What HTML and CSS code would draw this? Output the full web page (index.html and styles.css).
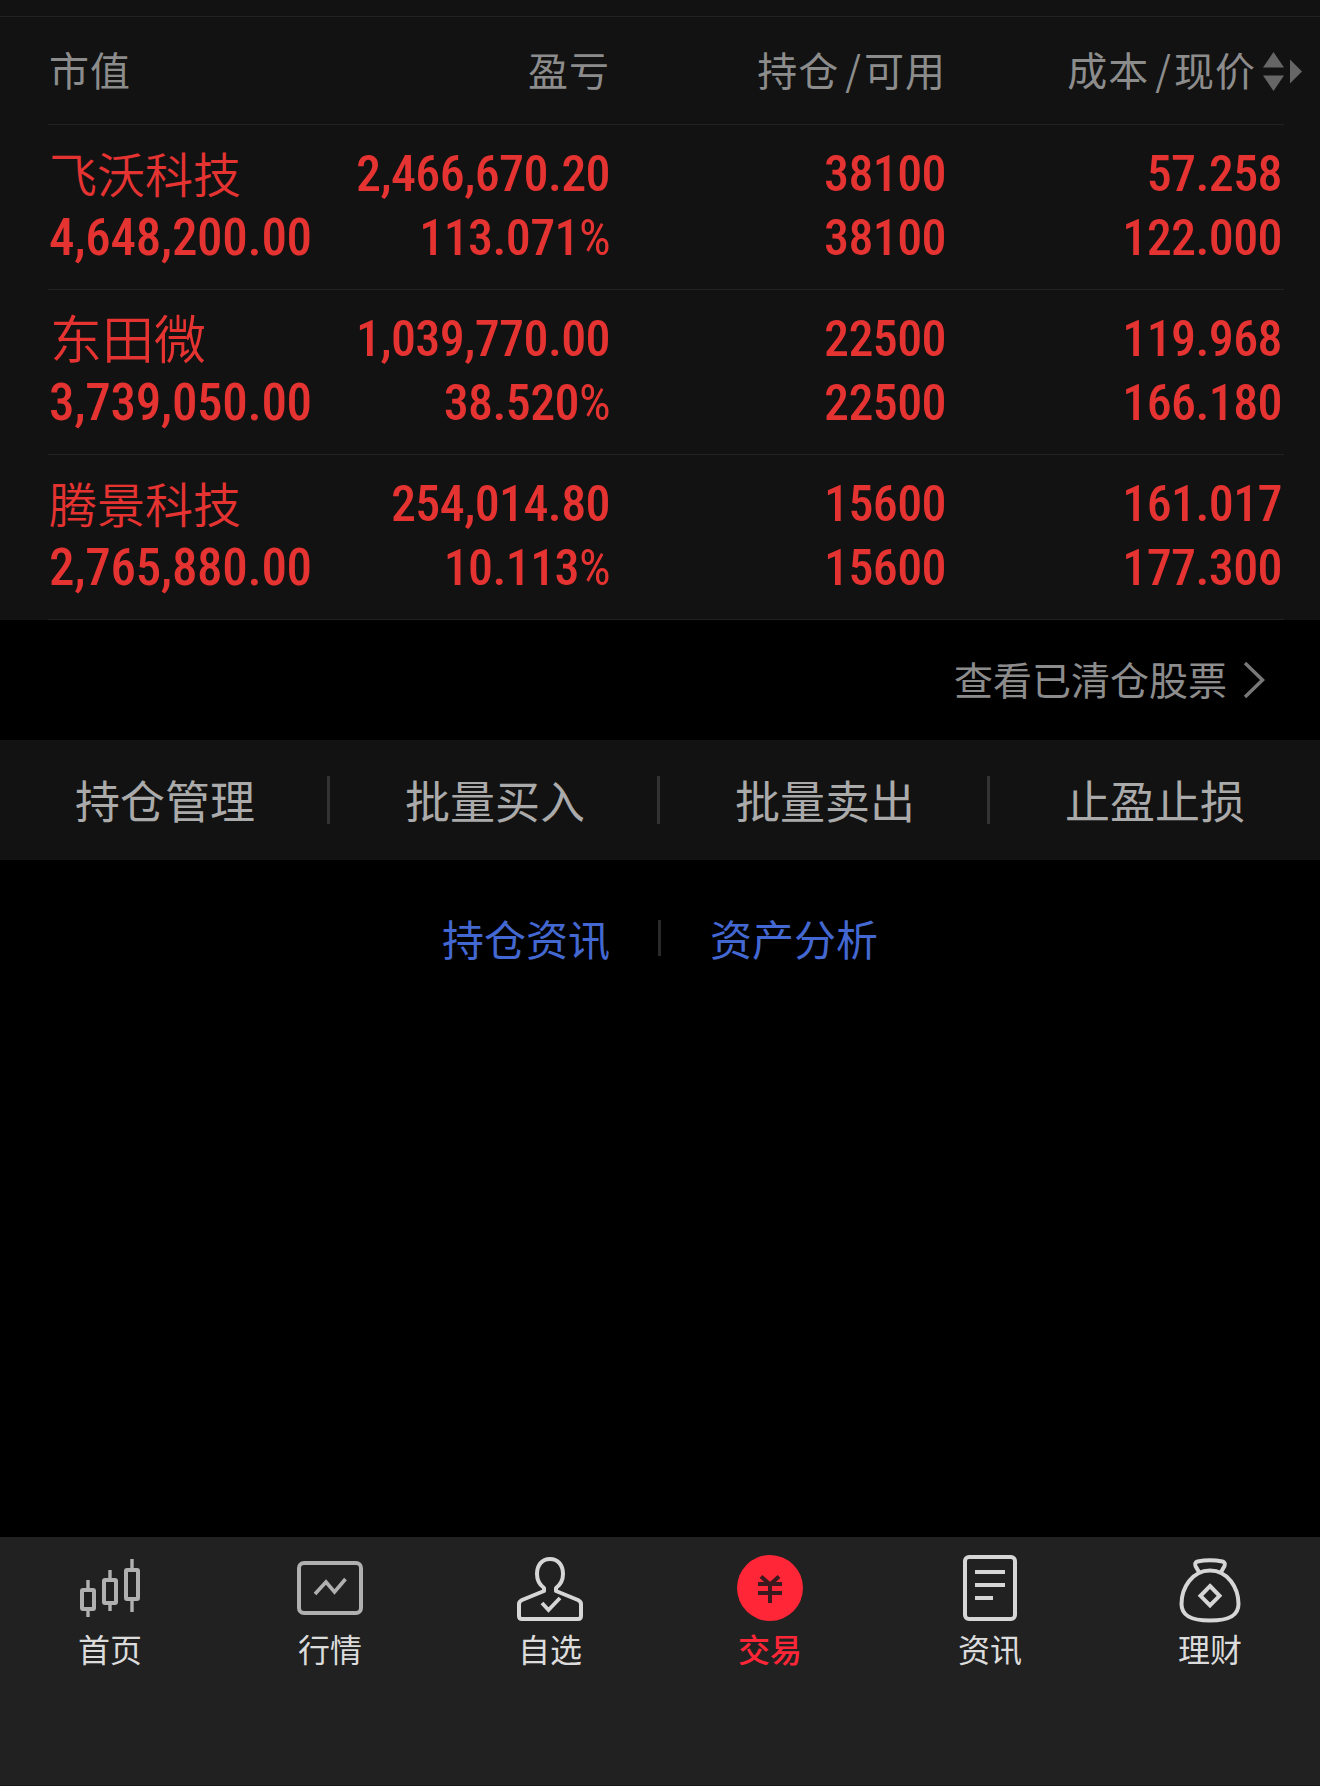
FILE: index.html
```html
<!DOCTYPE html>
<html lang="zh-CN">
<head>
    <meta charset="UTF-8">
    <meta name="viewport" content="width=device-width, initial-scale=1.0">
    <title>持仓</title>
    <link rel="stylesheet" href="styles.css">
</head>
<body>
    <main class="content">
        <section class="holdings">
            <div class="holdings-header grid-row">
                <span>市值</span>
                <span>盈亏</span>
                <span>持仓<i class="slash">/</i>可用</span>
                <span class="sortable">成本<i class="slash">/</i>现价
                    <svg class="sort-icon" width="40" height="40" viewBox="0 0 40 40" fill="#666">
                        <path d="M10.5 0L21 15.5H0zM0 23.5h21L10.5 39zM27 7.5L39 19.5 27 31.5z"/>
                    </svg>
                </span>
            </div>

            <div class="stock grid-row">
                <div class="cell"><span class="name">飞沃科技</span><span>4,648,200.00</span></div>
                <div class="cell"><span>2,466,670.20</span><span>113.071<i class="pct">%</i></span></div>
                <div class="cell"><span>38100</span><span>38100</span></div>
                <div class="cell"><span>57.258</span><span>122.000</span></div>
            </div>

            <div class="stock grid-row">
                <div class="cell"><span class="name name-short">东田微</span><span>3,739,050.00</span></div>
                <div class="cell"><span>1,039,770.00</span><span>38.520<i class="pct">%</i></span></div>
                <div class="cell"><span>22500</span><span>22500</span></div>
                <div class="cell"><span>119.968</span><span>166.180</span></div>
            </div>

            <div class="stock grid-row">
                <div class="cell"><span class="name">腾景科技</span><span>2,765,880.00</span></div>
                <div class="cell"><span>254,014.80</span><span>10.113<i class="pct">%</i></span></div>
                <div class="cell"><span>15600</span><span>15600</span></div>
                <div class="cell"><span>161.017</span><span>177.300</span></div>
            </div>
        </section>

        <a class="cleared">
            <span>查看已清仓股票</span>
            <svg width="22" height="38" viewBox="0 0 22 38" fill="none" stroke="#777" stroke-width="3.5">
                <path d="M2 2L19.5 19 2 36"/>
            </svg>
        </a>

        <div class="actions">
            <a>持仓管理</a>
            <a>批量买入</a>
            <a>批量卖出</a>
            <a>止盈止损</a>
        </div>

        <div class="links">
            <a>持仓资讯</a>
            <a>资产分析</a>
        </div>
    </main>

    <nav class="tabbar">
        <a class="tab dim">
            <svg viewBox="0 0 66 66" stroke-width="4">
                <rect x="5" y="35" width="12" height="19" rx="1"/>
                <rect x="27" y="25" width="12" height="23" rx="1"/>
                <rect x="49" y="15" width="12" height="29" rx="1"/>
                <path stroke-width="3.4" d="M11 25v10M11 54v8M33 15v10M33 48v8M55 4v11M55 44v13"/>
            </svg>
            首页
        </a>
        <a class="tab dim">
            <svg viewBox="0 0 66 66" stroke-width="4">
                <rect x="2" y="8" width="62" height="50" rx="5"/>
                <path stroke-width="3.6" d="M18 39L29 27l8.500 10L48.500 24"/>
            </svg>
            行情
        </a>
        <a class="tab">
            <svg viewBox="0 0 66 66" stroke-width="4">
                <path d="M27 36v-3c-4-3-7-8-7-14C20 10 25 4 33 4s13 6 13 15c0 6-3 11-7 14v3l22 9c2 1 3 2 3 4v12c0 2-1 3-3 3H5c-2 0-3-1-3-3V49c0-2 1-3 3-4z" stroke-linejoin="round"/>
                <path stroke-width="3.8" d="M25 48l6.500 7L43 43"/>
            </svg>
            自选
        </a>
        <a class="tab active">
            <svg viewBox="0 0 66 66" stroke-width="4">
                <circle cx="33" cy="33" r="33" fill="#ff2637" stroke="none"/>
                <path stroke="#3a1a1e" d="M24 21.500l9 8 9-8M21 29h24M21 38h24M33 29v19"/>
            </svg>
            交易
        </a>
        <a class="tab">
            <svg viewBox="0 0 66 66" stroke-width="4">
                <rect x="8" y="2" width="50" height="62" rx="4"/>
                <path d="M18 17h30M18 30h30M18 43h18"/>
            </svg>
            资讯
        </a>
        <a class="tab">
            <svg viewBox="0 0 66 66" stroke-width="4">
                <path d="M33 15.500C15 15.500 4.500 33 4.500 49c0 11 8.500 16.500 28.500 16.500s28.500-5.500 28.500-16.500c0-16-10.500-33.500-28.500-33.500z"/>
                <path d="M22.500 18l-4-7c-1-2 0-4 2-4.500 8-1.500 17-1.500 25 0 2 .5 3 2.500 2 4.500l-4 7"/>
                <path d="M33 31l9.500 9.800-9.500 9.700-9.500-9.700z"/>
            </svg>
            理财
        </a>
    </nav>
</body>
</html>
```
FILE: styles.css
```css
:root {
    --panel: #121212;
    --line: #222;
    --red: #e53332;
    --text-gray: #8c8c8c;
    --num-font: 'Roboto Condensed', 'Roboto', sans-serif;
}

* {
    box-sizing: border-box;
    margin: 0;
    padding: 0;
}

body {
    display: flex;
    flex-direction: column;
    height: 1786px;
    background: #000;
    font-family: 'Noto Sans CJK SC', sans-serif;
    font-weight: 370;
    overflow: hidden;
}

i {
    font-style: normal;
}

.content {
    flex: 1;
}

.grid-row {
    display: grid;
    grid-template-columns: 290px 271px 336px 1fr;
    margin: 0 36px 0 48px;
    border-bottom: 1px solid var(--line);
}

.grid-row > * {
    text-align: right;
}

.grid-row > :first-child {
    text-align: left;
}

/* holdings table */
.holdings {
    padding-top: 16px;
    background: var(--panel);
}

.holdings-header {
    position: relative;
    height: 109px;
    padding: 0 1px 0 1px;
    line-height: 107px;
    font-size: 40px;
    letter-spacing: 1px;
    color: var(--text-gray);
}

.holdings::before {
    content: '';
    display: block;
    height: 1px;
    margin-bottom: -1px;
    background: var(--line);
}

.slash {
    padding: 0 2px 0 6px;
}

.sortable {
    padding-right: 27px;
    white-space: nowrap;
}

.sort-icon {
    position: absolute;
    right: -19px;
    top: 36px;
}

.stock {
    height: 165px;
    padding: 17px 2px 0 1px;
    color: var(--red);
}

.cell {
    display: flex;
    flex-direction: column;
    font-family: var(--num-font);
    font-stretch: 75%;
    font-weight: 500;
    font-size: 50px;
    line-height: 64px;
    letter-spacing: -0.6px;
}

.cell:first-child {
    font-size: 51px;
    letter-spacing: -0.3px;
}

.cell .name {
    margin: -2px 0 2px;
    font-family: 'Noto Sans CJK SC', sans-serif;
    font-weight: 350;
    font-size: 48px;
    letter-spacing: 0;
}

.cell .name-short {
    padding-left: 1px;
    font-size: 52px;
}

.pct {
    font-weight: 400;
}

/* below the table */
.cleared {
    display: flex;
    justify-content: flex-end;
    align-items: center;
    gap: 16px;
    height: 120px;
    padding-right: 55px;
    font-size: 39px;
    line-height: 40px;
    color: var(--text-gray);
}

.cleared span {
    padding-bottom: 4px;
}

.actions {
    display: grid;
    grid-template-columns: repeat(4, 1fr);
    height: 120px;
    background: var(--panel);
}

.actions a {
    display: flex;
    align-items: center;
    justify-content: center;
    padding-bottom: 2px;
    font-size: 45px;
    color: #aaa;
    background: linear-gradient(#333, #333) right center / 3px 48px no-repeat border-box;
}

.actions a:last-child {
    background: none;
}

.links {
    display: flex;
    justify-content: center;
    align-items: center;
    height: 156px;
    font-size: 42px;
    line-height: 36px;
    color: #4468d2;
}

.links a {
    padding: 0 48px;
}

.links a + a {
    padding-left: 49px;
    border-left: 3px solid #2a2a2a;
}

/* bottom tab bar */
.tabbar {
    display: grid;
    grid-template-columns: repeat(6, 1fr);
    height: 249px;
    padding-top: 18px;
    background: #212121;
    border-bottom: 1px solid #181818;
}

.tab {
    display: flex;
    flex-direction: column;
    align-items: center;
    gap: 7px;
    font-size: 32px;
    line-height: 40px;
    color: #dcdcdc;
}

.tab svg {
    width: 66px;
    height: 66px;
    fill: none;
    stroke: #d6d6d6;
    overflow: visible;
}

.tab.dim svg {
    stroke: #b0b0b0;
}

.tab.active {
    color: #ff2637;
    font-weight: 500;
}
```
